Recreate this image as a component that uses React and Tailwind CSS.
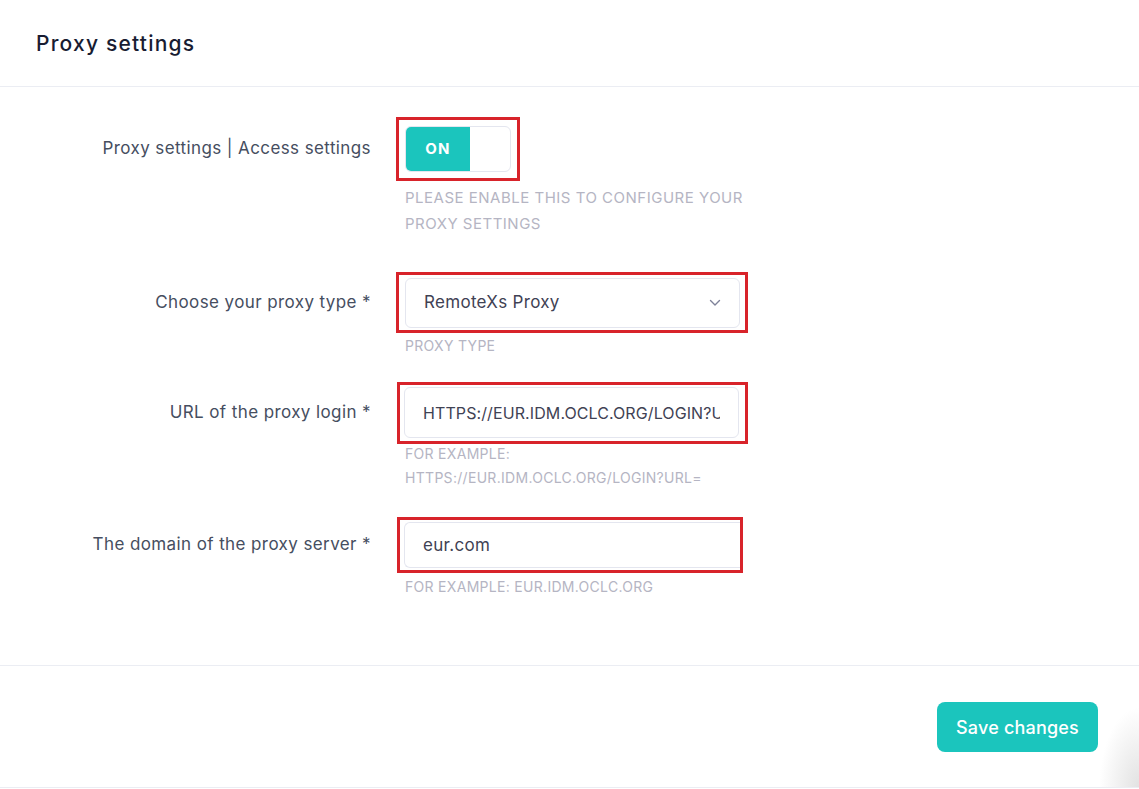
import React from "react";

function Chevron() {
  return (
    <svg width="12" height="8" viewBox="0 0 12 8" fill="none" className="shrink-0">
      <path d="M1.5 1.5 L6 6 L10.5 1.5" stroke="#7e8299" strokeWidth="1.4" strokeLinecap="round" strokeLinejoin="round" />
    </svg>
  );
}

function Label({ children, h }) {
  return (
    <div
      className={`w-[371px] shrink-0 flex items-center justify-end text-[17px] tracking-[0.4px] text-[#464e5f] ${h}`}
    >
      {children}
    </div>
  );
}

export default function App() {
  return (
    <div className="min-h-screen bg-white font-['Inter',sans-serif] text-[#3f4254]">
      {/* header */}
      <div className="h-[87px] border-b border-[#ebedf3] flex items-center px-[36px]">
        <h3 className="text-[21px] tracking-[1.2px] font-medium text-[#181c32] leading-none">Proxy settings</h3>
      </div>

      {/* body */}
      <div className="pt-[30px] pb-[66px]">
        {/* row 1 */}
        <div className="flex">
          <Label h="h-[64px]">Proxy settings | Access settings</Label>
          <div className="ml-[25px]">
            <div className="inline-flex border-[3px] border-[#d8232a] p-[6px]">
              <div className="flex w-[106px] h-[46px] rounded-[6px] border border-[#e4e6ef] bg-white overflow-hidden">
                <div className="w-[64px] bg-[#1bc5bd] flex items-center justify-center text-white text-[15px] font-bold tracking-[0.08em]">
                  ON
                </div>
              </div>
            </div>
            <div className="ml-[9px] mt-[4px] text-[15px] tracking-[0.5px] leading-[26px] text-[#b5b5c3] uppercase w-[380px]">
              Please enable this to configure your
              <br />
              proxy settings
            </div>
          </div>
        </div>

        {/* row 2 */}
        <div className="flex mt-[35px]">
          <Label h="h-[61px]">Choose your proxy type *</Label>
          <div className="ml-[25px]">
            <div className="inline-flex border-[3px] border-[#d8232a] pl-[6px] pr-[5px] pt-[3px] pb-[2px]">
              <div className="w-[335px] h-[50px] rounded-[6px] border border-[#e4e6ef] bg-white flex items-center justify-between pl-[18px] pr-[18px]">
                <span className="text-[17px] tracking-[0.3px] text-[#3f4254]">RemoteXs Proxy</span>
                <Chevron />
              </div>
            </div>
            <div className="ml-[9px] mt-[1px] text-[14px] tracking-[0.3px] leading-[24px] text-[#b5b5c3] uppercase">Proxy type</div>
          </div>
        </div>

        {/* row 3 */}
        <div className="flex mt-[24px]">
          <Label h="h-[62px]">URL of the proxy login *</Label>
          <div className="ml-[26px]">
            <div className="inline-flex border-[3px] border-[#d8232a] pl-[4px] pr-[6px] pt-[2px] pb-[3px]">
              <input
                readOnly
                value="HTTPS://EUR.IDM.OCLC.ORG/LOGIN?URL="
                className="w-[335px] h-[51px] rounded-[6px] border border-[#e4e6ef] bg-white pl-[18px] pr-[18px] text-[16px] tracking-[0.1px] text-[#3f4254] outline-none"
              />
            </div>
            <div className="ml-[8px] mt-[-2px] text-[14px] tracking-[0.3px] leading-[24px] text-[#b5b5c3] uppercase">
              For example:
              <br />
              https://eur.idm.oclc.org/login?url=
            </div>
          </div>
        </div>

        {/* row 4 */}
        <div className="flex mt-[27px]">
          <Label h="h-[56px]">The domain of the proxy server *</Label>
          <div className="ml-[26px]">
            <div className="inline-flex border-[3px] border-[#d8232a] pl-[4px] pt-[2px] pb-[2px] overflow-hidden">
              <input
                readOnly
                value="eur.com"
                className="w-[336px] h-[46px] rounded-l-[6px] border border-r-0 border-[#e4e6ef] bg-white pl-[18px] pr-[18px] text-[17px] tracking-[0.3px] text-[#3f4254] outline-none"
              />
            </div>
            <div className="ml-[8px] mt-[2px] text-[14px] tracking-[0.3px] leading-[24px] text-[#b5b5c3] uppercase">
              For example: eur.idm.oclc.org
            </div>
          </div>
        </div>
      </div>

      {/* footer */}
      <div className="relative border-t border-b border-[#ebedf3] pt-[36px] pb-[35px] pr-[41px] flex justify-end">
        <button className="w-[161px] h-[50px] rounded-[8px] bg-[#1bc5bd] text-white text-[18px] tracking-[0.2px] font-medium">
          Save changes
        </button>
        <div className="pointer-events-none absolute right-0 bottom-0 w-[40px] h-[80px] bg-[radial-gradient(ellipse_at_100%_100%,#e2e2e2_0%,rgba(255,255,255,0)_70%)]" />
      </div>
    </div>
  );
}
